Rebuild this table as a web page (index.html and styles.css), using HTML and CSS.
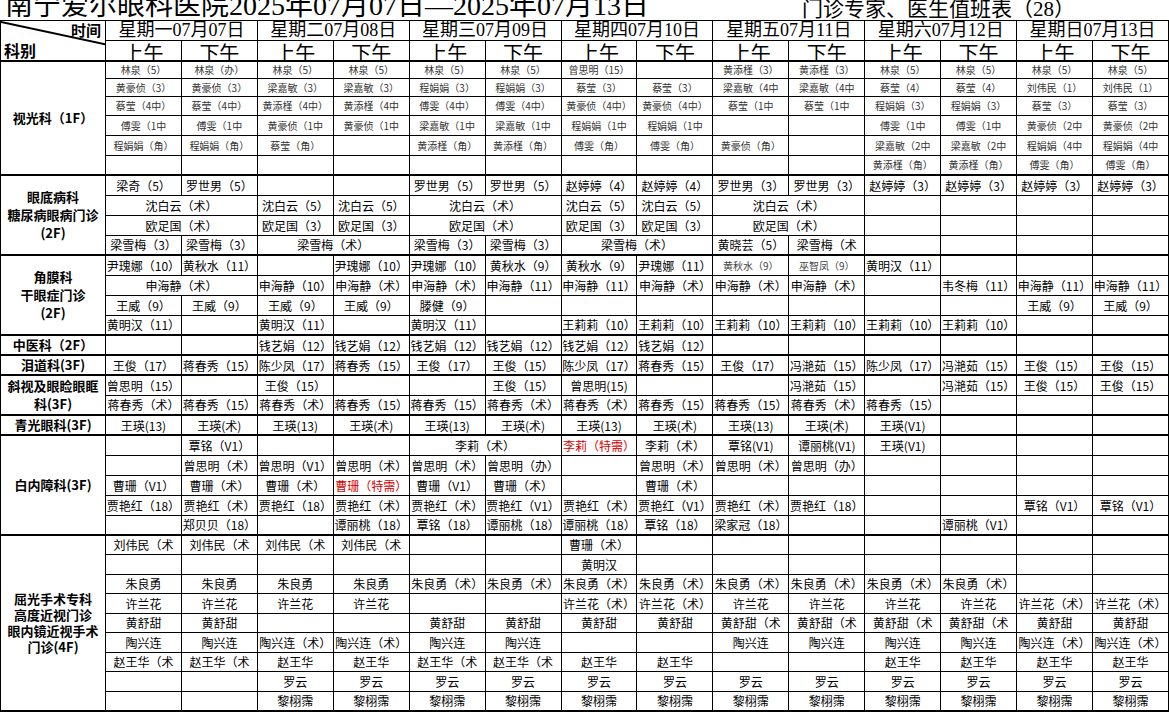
FILE: index.html
```html
<!DOCTYPE html>
<html lang="zh-CN">
<head>
<meta charset="utf-8">
<title>门诊专家、医生值班表</title>
<link rel="stylesheet" href="styles.css">
</head>
<body>
<div class="title"><span class="t1">南宁爱尔眼科医院2025年07月07日—2025年07月13日</span><span class="t2">门诊专家、医生值班表（28）</span></div>
<table class="sched">
<colgroup><col class="c0"><col><col><col><col><col><col><col><col><col><col><col><col><col><col></colgroup>
<thead>
<tr class="hd">
<th rowspan="2" class="corner"><div class="corner-in"><span class="sj">时间</span><span class="kb">科别</span></div><svg class="diag" width="110" height="26" viewBox="0 0 110 26"><line x1="0" y1="1" x2="108" y2="24" stroke="#000" stroke-width="2"/></svg></th>
<th colspan="2" class="day">星期一07月07日</th>
<th colspan="2" class="day">星期二07月08日</th>
<th colspan="2" class="day">星期三07月09日</th>
<th colspan="2" class="day">星期四07月10日</th>
<th colspan="2" class="day">星期五07月11日</th>
<th colspan="2" class="day">星期六07月12日</th>
<th colspan="2" class="day">星期日07月13日</th>
</tr>
<tr class="hd">
<th class="ap"><div>上午</div></th><th class="ap"><div>下午</div></th>
<th class="ap"><div>上午</div></th><th class="ap"><div>下午</div></th>
<th class="ap"><div>上午</div></th><th class="ap"><div>下午</div></th>
<th class="ap"><div>上午</div></th><th class="ap"><div>下午</div></th>
<th class="ap"><div>上午</div></th><th class="ap"><div>下午</div></th>
<th class="ap"><div>上午</div></th><th class="ap"><div>下午</div></th>
<th class="ap"><div>上午</div></th><th class="ap"><div>下午</div></th>
</tr>
</thead>

<tbody class="sg">
<tr class="h17"><th rowspan="6" class="lab">视光科（1F）</th><td>林泉（5）</td><td>林泉（办）</td><td>林泉（5）</td><td>林泉（5）</td><td>林泉（5）</td><td>林泉（5）</td><td>曾思明（15）</td><td></td><td>黄添槿（3）</td><td>黄添槿（3）</td><td>林泉（5）</td><td>林泉（5）</td><td>林泉（5）</td><td>林泉（5）</td></tr>
<tr class="h18"><td>黄豪侦（3）</td><td>黄豪侦（3）</td><td>梁嘉敏（3）</td><td>梁嘉敏（3）</td><td>程娟娟（3）</td><td>程娟娟（3）</td><td>蔡莹（3）</td><td>蔡莹（3）</td><td>梁嘉敏（4中</td><td>梁嘉敏（4中</td><td>蔡莹（4）</td><td>蔡莹（4）</td><td>刘伟民（1）</td><td>刘伟民（1）</td></tr>
<tr class="h19"><td>蔡莹（4中）</td><td>蔡莹（4中）</td><td>黄添槿（4中）</td><td>黄添槿（4中</td><td>傅雯（4中）</td><td>傅雯（4中）</td><td>黄豪侦（4中）</td><td>黄豪侦（4中）</td><td>蔡莹（1中</td><td>蔡莹（1中</td><td>程娟娟（3）</td><td>程娟娟（3）</td><td>蔡莹（3）</td><td>蔡莹（3）</td></tr>
<tr><td>傅雯（1中</td><td>傅雯（1中</td><td>黄豪侦（1中</td><td>黄豪侦（1中</td><td>梁嘉敏（1中</td><td>梁嘉敏（1中</td><td>程娟娟（1中</td><td>程娟娟（1中</td><td></td><td></td><td>傅雯（1中</td><td>傅雯（1中</td><td>黄豪侦（2中</td><td>黄豪侦（2中</td></tr>
<tr><td>程娟娟（角）</td><td>程娟娟（角）</td><td>蔡莹（角）</td><td></td><td>黄添槿（角）</td><td>黄添槿（角）</td><td>傅雯（角）</td><td>傅雯（角）</td><td>黄豪侦（角）</td><td></td><td>梁嘉敏（2中</td><td>梁嘉敏（2中</td><td>程娟娟（4中</td><td>程娟娟（4中</td></tr>
<tr><td></td><td></td><td></td><td></td><td></td><td></td><td></td><td></td><td></td><td></td><td>黄添槿（角）</td><td>黄添槿（角）</td><td>傅雯（角）</td><td>傅雯（角）</td></tr>
</tbody>

<tbody>
<tr><th rowspan="4" class="lab">眼底病科<br>糖尿病眼病门诊<br>(2F)</th><td>梁奇（5）</td><td>罗世男（5）</td><td></td><td></td><td>罗世男（5）</td><td>罗世男（5）</td><td>赵婷婷（4）</td><td>赵婷婷（4）</td><td>罗世男（3）</td><td>罗世男（3）</td><td>赵婷婷（3）</td><td>赵婷婷（3）</td><td>赵婷婷（3）</td><td>赵婷婷（3）</td></tr>
<tr><td colspan="2">沈白云（术）</td><td>沈白云（5）</td><td>沈白云（5）</td><td colspan="2">沈白云（术）</td><td>沈白云（5）</td><td>沈白云（5）</td><td colspan="2">沈白云（术）</td><td></td><td></td><td></td><td></td></tr>
<tr><td colspan="2">欧足国（术）</td><td>欧足国（3）</td><td>欧足国（3）</td><td colspan="2">欧足国（术）</td><td>欧足国（3）</td><td>欧足国（3）</td><td colspan="2">欧足国（术）</td><td></td><td></td><td></td><td></td></tr>
<tr><td>梁雪梅（3）</td><td>梁雪梅（3）</td><td colspan="2">梁雪梅（术）</td><td>梁雪梅（3）</td><td>梁雪梅（3）</td><td colspan="2">梁雪梅（术）</td><td>黄晓芸（5）</td><td>梁雪梅（术</td><td></td><td></td><td></td><td></td></tr>
</tbody>

<tbody>
<tr><th rowspan="4" class="lab">角膜科<br>干眼症门诊<br>(2F)</th><td>尹瑰娜（10）</td><td>黄秋水（11）</td><td></td><td>尹瑰娜（10）</td><td>尹瑰娜（10）</td><td>黄秋水（9）</td><td>黄秋水（9）</td><td>尹瑰娜（11）</td><td class="sm">黄秋水（9）</td><td class="sm">巫智凤（9）</td><td>黄明汉（11）</td><td></td><td></td><td></td></tr>
<tr><td colspan="2">申海静（术）</td><td>申海静（10）</td><td>申海静（术）</td><td>申海静（术）</td><td>申海静（11）</td><td>申海静（11）</td><td>申海静（术）</td><td>申海静（术）</td><td>申海静（术）</td><td></td><td>韦冬梅（11）</td><td>申海静（11）</td><td>申海静（11）</td></tr>
<tr><td>王威（9）</td><td>王威（9）</td><td>王威（9）</td><td>王威（9）</td><td>滕健（9）</td><td></td><td></td><td></td><td></td><td></td><td></td><td></td><td>王威（9）</td><td>王威（9）</td></tr>
<tr><td>黄明汉（11）</td><td></td><td>黄明汉（11）</td><td></td><td>黄明汉（11）</td><td></td><td>王莉莉（10）</td><td>王莉莉（10）</td><td>王莉莉（10）</td><td>王莉莉（10）</td><td>王莉莉（10）</td><td>王莉莉（10）</td><td></td><td></td></tr>
</tbody>

<tbody>
<tr><th class="lab">中医科（2F）</th><td></td><td></td><td>钱艺娟（12）</td><td>钱艺娟（12）</td><td>钱艺娟（12）</td><td>钱艺娟（12）</td><td>钱艺娟（12）</td><td>钱艺娟（12）</td><td></td><td></td><td></td><td></td><td></td><td></td></tr>
</tbody>

<tbody>
<tr><th class="lab">泪道科(3F)</th><td>王俊（17）</td><td>蒋春秀（15）</td><td>陈少凤（17）</td><td>蒋春秀（15）</td><td>王俊（17）</td><td>王俊（15）</td><td>陈少凤（17）</td><td>蒋春秀（15）</td><td>王俊（17）</td><td>冯滟茹（15）</td><td>陈少凤（17）</td><td>冯滟茹（15）</td><td>王俊（15）</td><td>王俊（15）</td></tr>
</tbody>

<tbody>
<tr><th rowspan="2" class="lab">斜视及眼睑眼眶<br>科(3F)</th><td>曾思明（15）</td><td></td><td>王俊（15）</td><td></td><td></td><td>王俊（15）</td><td>曾思明(15)</td><td></td><td></td><td>冯滟茹（15）</td><td></td><td>冯滟茹（15）</td><td>王俊（15）</td><td>王俊（15）</td></tr>
<tr><td>蒋春秀（术）</td><td>蒋春秀（15）</td><td>蒋春秀（术）</td><td>蒋春秀（15）</td><td>蒋春秀（15）</td><td>蒋春秀（术）</td><td>蒋春秀（术）</td><td>蒋春秀（15）</td><td>蒋春秀（15）</td><td>蒋春秀（术）</td><td>蒋春秀（15）</td><td></td><td></td><td></td></tr>
</tbody>

<tbody>
<tr><th class="lab">青光眼科(3F)</th><td>王瑛(13)</td><td>王瑛(术)</td><td>王瑛(13)</td><td>王瑛(术)</td><td>王瑛(13)</td><td>王瑛(术)</td><td>王瑛(13)</td><td>王瑛(术)</td><td>王瑛(13)</td><td>王瑛(术)</td><td>王瑛(V1)</td><td></td><td></td><td></td></tr>
</tbody>

<tbody>
<tr><th rowspan="5" class="lab">白内障科(3F)</th><td></td><td>覃铭（V1）</td><td></td><td></td><td colspan="2">李莉（术）</td><td class="red">李莉（特需）</td><td>李莉（术）</td><td>覃铭(V1)</td><td>谭丽桃(V1)</td><td>王瑛(V1)</td><td></td><td></td><td></td></tr>
<tr><td></td><td>曾思明（术）</td><td>曾思明（V1）</td><td>曾思明（术）</td><td>曾思明（术）</td><td>曾思明（办）</td><td></td><td>曾思明（术）</td><td>曾思明（术）</td><td>曾思明（办）</td><td></td><td></td><td></td><td></td></tr>
<tr><td>曹珊（V1）</td><td>曹珊（术）</td><td>曹珊（术）</td><td class="red">曹珊（特需）</td><td>曹珊（V1）</td><td>曹珊（术）</td><td></td><td>曹珊（术）</td><td></td><td></td><td></td><td></td><td></td><td></td></tr>
<tr><td>贾艳红（18）</td><td>贾艳红（术）</td><td>贾艳红（18）</td><td>贾艳红（术）</td><td>贾艳红（术）</td><td>贾艳红（V1）</td><td>贾艳红（术）</td><td>贾艳红（V1）</td><td>贾艳红（术）</td><td>贾艳红（18）</td><td></td><td></td><td>覃铭（V1）</td><td>覃铭（V1）</td></tr>
<tr><td></td><td>郑贝贝（18）</td><td></td><td>谭丽桃（18）</td><td>覃铭（18）</td><td>谭丽桃（18）</td><td>谭丽桃（18）</td><td>覃铭（18）</td><td>梁家冠（18）</td><td></td><td></td><td>谭丽桃（V1）</td><td></td><td></td></tr>
</tbody>

<tbody>
<tr class="h19"><th rowspan="9" class="lab lab4">屈光手术专科<br>高度近视门诊<br>眼内镜近视手术<br>门诊(4F)</th><td>刘伟民（术</td><td>刘伟民（术</td><td>刘伟民（术</td><td>刘伟民（术</td><td></td><td></td><td>曹珊（术）</td><td></td><td></td><td></td><td></td><td></td><td></td><td></td></tr>
<tr><td></td><td></td><td></td><td></td><td></td><td></td><td>黄明汉</td><td></td><td></td><td></td><td></td><td></td><td></td><td></td></tr>
<tr class="h19"><td>朱良勇</td><td>朱良勇</td><td>朱良勇</td><td>朱良勇</td><td>朱良勇（术）</td><td>朱良勇（术）</td><td>朱良勇（术）</td><td>朱良勇（术）</td><td>朱良勇（术）</td><td>朱良勇（术）</td><td>朱良勇（术）</td><td>朱良勇（术）</td><td></td><td></td></tr>
<tr><td>许兰花</td><td>许兰花</td><td>许兰花</td><td>许兰花</td><td></td><td></td><td>许兰花（术）</td><td>许兰花（术）</td><td>许兰花</td><td>许兰花</td><td>许兰花</td><td>许兰花</td><td>许兰花（术）</td><td>许兰花（术）</td></tr>
<tr class="h19"><td>黄舒甜</td><td>黄舒甜</td><td></td><td></td><td>黄舒甜</td><td>黄舒甜</td><td>黄舒甜</td><td>黄舒甜</td><td>黄舒甜（术</td><td>黄舒甜（术</td><td>黄舒甜（术</td><td>黄舒甜（术</td><td>黄舒甜</td><td>黄舒甜</td></tr>
<tr><td>陶兴连</td><td>陶兴连</td><td>陶兴连（术）</td><td>陶兴连（术）</td><td>陶兴连</td><td>陶兴连</td><td></td><td></td><td>陶兴连</td><td>陶兴连</td><td>陶兴连</td><td>陶兴连</td><td>陶兴连（术）</td><td>陶兴连（术）</td></tr>
<tr class="h19"><td>赵王华（术</td><td>赵王华（术</td><td>赵王华</td><td>赵王华</td><td>赵王华（术</td><td>赵王华（术</td><td>赵王华</td><td>赵王华</td><td></td><td></td><td>赵王华</td><td>赵王华</td><td>赵王华</td><td>赵王华</td></tr>
<tr><td></td><td></td><td>罗云</td><td>罗云</td><td>罗云</td><td>罗云</td><td>罗云</td><td>罗云</td><td>罗云</td><td>罗云</td><td>罗云</td><td>罗云</td><td>罗云</td><td>罗云</td></tr>
<tr><td></td><td></td><td>黎栩霈</td><td>黎栩霈</td><td>黎栩霈</td><td>黎栩霈</td><td>黎栩霈</td><td>黎栩霈</td><td>黎栩霈</td><td>黎栩霈</td><td>黎栩霈</td><td>黎栩霈</td><td>黎栩霈</td><td>黎栩霈</td></tr>
</tbody>
</table>
</body>
</html>
```

FILE: styles.css
```css
html, body {
  margin: 0;
  padding: 0;
  background: #fff;
}
body {
  font-family: "Noto Sans CJK SC", sans-serif;
  color: #000;
  width: 1169px;
  overflow: hidden;
}
.title {
  height: 20px;
  overflow: hidden;
  display: flex;
  align-items: flex-end;
  white-space: nowrap;
  font-family: "Liberation Serif", "Noto Sans CJK SC", serif;
}
.t1 {
  flex: none;
  font-size: 28px;
  line-height: 28px;
  padding-left: 5px;
}
.t2 {
  flex: none;
  font-size: 21px;
  line-height: 22px;
  margin-left: auto;
  margin-right: 94px;
}
.sched {
  border-collapse: collapse;
  table-layout: fixed;
  width: 1169px;
  border-bottom: 2px solid #000;
}
.c0 { width: 105px; }
.sched td, .sched th {
  border: 1px solid #000;
  padding: 0;
  text-align: center;
  vertical-align: middle;
  white-space: nowrap;
  overflow: hidden;
  font-weight: normal;
}
.sched tr { height: 20px; }
.sched tr.h17 { height: 17px; }
.sched tr.h18 { height: 18px; }
.sched tr.h19 { height: 19px; }
.sched td {
  font-size: 12px;
  line-height: 15px;
}
.sched tbody { border-top: 2px solid #000; }
.sched thead tr { height: 20px; }
.corner {
  position: relative;
  vertical-align: top;
}
.corner-in {
  height: 39px;
  display: flex;
  flex-direction: column;
  justify-content: space-between;
  font-weight: bold;
}
.sj {
  align-self: flex-end;
  font-size: 15px;
  line-height: 17px;
  padding-right: 4px;
}
.kb {
  align-self: flex-start;
  font-size: 16px;
  line-height: 19px;
  padding-left: 3px;
}
.diag {
  position: absolute;
  left: 0;
  top: 0;
  overflow: visible;
}
.day {
  font-family: "Liberation Serif", "Noto Sans CJK SC", serif;
  font-size: 18px;
  line-height: 19px;
}
.ap div {
  height: 19px;
  overflow: hidden;
  font-family: "Liberation Serif", "Noto Sans CJK SC", serif;
  font-size: 20px;
  line-height: 26px;
}
.lab {
  font-size: 13px;
  line-height: 18px;
  font-weight: bold !important;
  white-space: normal !important;
}
.lab4 { line-height: 16px; }
.sg td {
  font-size: 10px;
  line-height: 13px;
  color: #333;
}
.sched td.sm {
  font-size: 10px;
  color: #444;
}
.sched td.red { color: #d40000; }
```
